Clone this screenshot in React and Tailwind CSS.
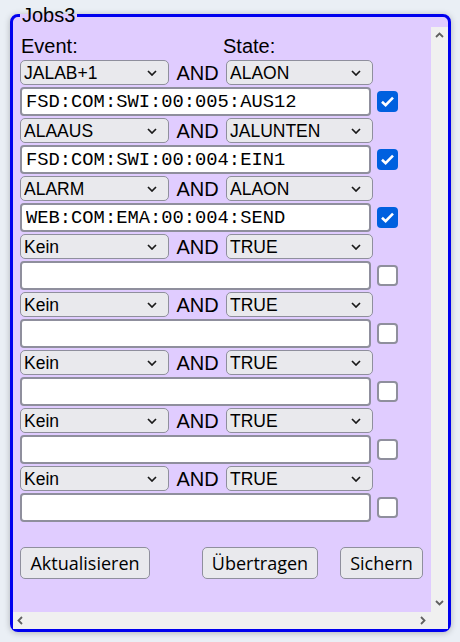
import React from 'react';

const jobs = [
    { ev: 'JALAB+1', st: 'ALAON', cmd: 'FSD:COM:SWI:00:005:AUS12', on: true },
    { ev: 'ALAAUS', st: 'JALUNTEN', cmd: 'FSD:COM:SWI:00:004:EIN1', on: true },
    { ev: 'ALARM', st: 'ALAON', cmd: 'WEB:COM:EMA:00:004:SEND', on: true },
    { ev: 'Kein', st: 'TRUE', cmd: '', on: false },
    { ev: 'Kein', st: 'TRUE', cmd: '', on: false },
    { ev: 'Kein', st: 'TRUE', cmd: '', on: false },
    { ev: 'Kein', st: 'TRUE', cmd: '', on: false },
    { ev: 'Kein', st: 'TRUE', cmd: '', on: false },
];

function Select({ value }) {
    return (
        <div className="relative h-[25px]">
            <select
                defaultValue={value}
                className="appearance-none w-full h-full bg-[#e9e9ed] border border-[#8f8f9d] rounded-[5px] pl-[3px] py-0 text-[17.5px] leading-[normal] text-black font-['Liberation_Sans',Arial,sans-serif] outline-none"
            >
                <option>{value}</option>
            </select>
            {/* chevron */}
            <svg className="absolute right-[12px] top-[10px] pointer-events-none" width="10" height="6" viewBox="0 0 10 6">
                <path d="M1 1 L5 5 L9 1" fill="none" stroke="#1a1a1a" strokeWidth="1.7" />
            </svg>
        </div>
    );
}

function Check({ on }) {
    if (on) {
        return (
            <span className="flex items-center justify-center w-[21px] h-[21px] rounded-[4px] bg-[#0060df]">
                <svg width="15" height="13" viewBox="0 0 15 13">
                    <path d="M2 6.8 L5.6 10.2 L13 2.6" fill="none" stroke="white" strokeWidth="2.6" />
                </svg>
            </span>
        );
    }
    return <span className="block w-[21px] h-[21px] rounded-[4px] border-2 border-[#8f8f9d] bg-white" />;
}

function Chevron({ d }) {
    return (
        <svg width="9" height="9" viewBox="0 0 9 9">
            <path d={d} fill="none" stroke="#606060" strokeWidth="1.8" />
        </svg>
    );
}

export default function App() {
    return (
        <div className="w-[460px] h-[642px] bg-[#eaeff5] pl-[10px] pt-[4px] font-['Liberation_Sans',Arial,sans-serif] text-black">
            <fieldset className="w-[441px] border-[3px] border-[#0000ee] rounded-lg bg-[#e0ccff] shadow-[0_1px_6px_rgba(0,0,0,0.25)]">
                <legend className="ml-[7px] px-[2px] text-[20px] leading-[23px]">Jobs3</legend>

                <div className="h-[602px] flex flex-col">
                    <div className="flex h-[585px]">
                        <div className="flex-1 overflow-hidden px-[7px] pt-[8px]">
                            <div className="grid grid-cols-[149px_57px_147px_auto] gap-y-[2px]">
                                {/* --- Kopfzeile --- */}
                                <div className="text-[20px] leading-[23px] pl-[1px]">Event:</div>
                                <div />
                                <div className="text-[20px] leading-[23px] -ml-[3px]">State:</div>
                                <div />

                                {jobs.map((j, i) => (
                                    <React.Fragment key={i}>
                                        <Select value={j.ev} />
                                        <div className="flex items-center justify-center text-[20px] leading-none">AND</div>
                                        <Select value={j.st} />
                                        <div />

                                        <input
                                            type="text"
                                            defaultValue={j.cmd}
                                            className="col-span-3 w-[351px] h-[29px] bg-white border-2 border-[#8f8f9d] rounded-[4px] px-[4px] text-[18.8px] font-['Liberation_Mono','DejaVu_Sans_Mono',monospace] outline-none"
                                        />
                                        <div className="flex items-center pl-[4px]">
                                            <Check on={j.on} />
                                        </div>
                                    </React.Fragment>
                                ))}
                            </div>

                            {/* --- Buttons --- */}
                            <div className="flex mt-[25px] font-['Open_Sans',sans-serif] text-[18px]">
                                <button className="w-[130px] h-[32px] bg-[#e9e9ed] border border-[#8f8f9d] rounded-[5px]">Aktualisieren</button>
                                <button className="ml-[52px] w-[116px] h-[32px] bg-[#e9e9ed] border border-[#8f8f9d] rounded-[5px]">Übertragen</button>
                                <button className="ml-[22px] w-[83px] h-[32px] bg-[#e9e9ed] border border-[#8f8f9d] rounded-[5px]">Sichern</button>
                            </div>
                        </div>

                        {/* --- vertikale Scrollbar --- */}
                        <div className="w-[17px] bg-[#f0f0f0] flex flex-col items-center justify-between pt-[4px] pb-[5px]">
                            <Chevron d="M1 6 L4.5 2.5 L8 6" />
                            <Chevron d="M1 3 L4.5 6.5 L8 3" />
                        </div>
                    </div>

                    {/* --- horizontale Scrollbar --- */}
                    <div className="h-[17px] bg-[#f0f0f0] flex items-center justify-between pl-[3px] pr-[21px]">
                        <Chevron d="M6 1 L2.5 4.5 L6 8" />
                        <Chevron d="M3 1 L6.5 4.5 L3 8" />
                    </div>
                </div>
            </fieldset>
        </div>
    );
}
